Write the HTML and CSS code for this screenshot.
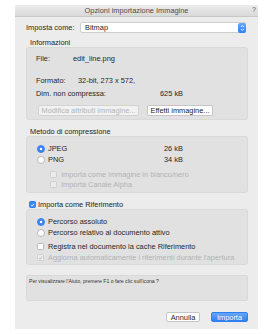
FILE: index.html
```html
<!DOCTYPE html>
<html>
<head>
<meta charset="utf-8">
<link rel="stylesheet" href="styles.css">
</head>
<body>
<div class="window">
  <div class="titlebar">
    <span class="title">Opzioni importazione Immagine</span>
    <span class="qhelp">?</span>
  </div>
  <div class="content">
    <div class="field-row">
      <span class="field-label">Imposta come:</span>
      <div class="select">
        <span class="select-value">Bitmap</span>
        <span class="stepper">
          <svg width="5" height="8" viewBox="0 0 5 8"><path d="M1 3 L2.5 1.5 L4 3 M1 5 L2.5 6.5 L4 5" fill="none" stroke="#fff" stroke-width="0.9"/></svg>
        </span>
      </div>
    </div>

    <div class="section-title">Informazioni</div>
    <div class="group info">
      <div class="kv"><span class="k k-file">File:</span><span>edit_line.png</span></div>
      <div class="kv kv-gap"><span class="k k-fmt">Formato:</span><span>32-bit, 273 x 572,</span></div>
      <div class="kv"><span class="k k-dim">Dim. non compressa:</span><span>625 kB</span></div>
      <div class="btn-row">
        <span class="btn disabled btn-mod">Modifica attributi immagine...</span>
        <span class="btn btn-eff">Effetti immagine...</span>
      </div>
    </div>

    <div class="section-title sec2">Metodo di compressione</div>
    <div class="group comp">
      <div class="opt"><span class="radio on"></span><span class="opt-name">JPEG</span><span>26 kB</span></div>
      <div class="opt"><span class="radio"></span><span class="opt-name">PNG</span><span>34 kB</span></div>
      <div class="opt sub dis first-sub"><span class="check dis"></span><span>Importa come immagine in bianco/nero</span></div>
      <div class="opt sub dis"><span class="check dis"></span><span>Importa Canale Alpha</span></div>
    </div>

    <div class="section-title check-title"><span class="check on small"><svg width="6" height="6" viewBox="0 0 6 6"><path d="M1.2 3.1 L2.5 4.4 L4.8 1.5" fill="none" stroke="#fff" stroke-width="1"/></svg></span><span>Importa come Riferimento</span></div>
    <div class="group ref">
      <div class="opt"><span class="radio on"></span><span>Percorso assoluto</span></div>
      <div class="opt"><span class="radio"></span><span>Percorso relativo al documento attivo</span></div>
      <div class="opt cache"><span class="check"></span><span>Registra nel documento la cache Riferimento</span></div>
      <div class="opt dis"><span class="check dis"><svg width="6" height="6" viewBox="0 0 6 6"><path d="M1.2 3.1 L2.5 4.4 L4.8 1.5" fill="none" stroke="#b5b5b5" stroke-width="1"/></svg></span><span>Aggiorna automaticamente i riferimenti durante l'apertura</span></div>
    </div>

    <div class="helpbox">Per visualizzare l'Aiuto, premere F1 o fare clic sull'icona ?</div>

    <div class="footer">
      <span class="btn btn-cancel">Annulla</span>
      <span class="btn primary">Importa</span>
    </div>
  </div>
</div>
</body>
</html>
```

FILE: styles.css
```css
html, body {
  margin: 0;
  padding: 0;
  background: #ffffff;
}
body {
  font-family: "Liberation Sans", Arial, sans-serif;
  font-size: 7.4px;
  color: #262626;
}
.window {
  margin: 5px 0 0 15px;
  width: 243px;
  height: 324px;
  background: #ececec;
  display: flex;
  flex-direction: column;
}
.titlebar {
  height: 11px;
  background: linear-gradient(#ececec, #d9d9d9);
  border-bottom: 1px solid #c8c8c8;
  display: flex;
  align-items: center;
  justify-content: center;
  position: relative;
  color: #4a4a4a;
}
.title { font-size: 7.4px; }
.qhelp {
  position: absolute;
  right: 2px;
  top: 1px;
  font-size: 7px;
  color: #555;
}
.content {
  padding: 4px 10px 0 11px;
  display: flex;
  flex-direction: column;
}
.field-row {
  display: flex;
  align-items: center;
  height: 13px;
}
.field-label { width: 54px; }
.select {
  flex: 1;
  margin-right: 2px;
  height: 11px;
  background: #fff;
  border: 1px solid #cfcfcf;
  border-radius: 2px;
  display: flex;
  align-items: center;
  justify-content: space-between;
  box-sizing: border-box;
}
.select-value { padding-left: 4px; }
.stepper {
  width: 8px;
  height: 10px;
  background: linear-gradient(#6aa9fb, #2f7ff3);
  border-radius: 2px;
  margin-right: -1px;
  display: flex;
  align-items: center;
  justify-content: center;
}
.section-title {
  height: 9px;
  line-height: 9px;
  padding-left: 4px;
  margin-top: 4px;
  color: #222;
}
.section-title.sec2 { margin-top: 7px; }
.group {
  background: #e1e1e1;
  border: 1px solid #d9d9d9;
  border-radius: 3px;
  box-sizing: border-box;
}
.info {
  height: 73px;
  padding: 6px 0 0 9px;
}
.kv {
  display: flex;
  height: 10px;
  line-height: 10px;
}
.kv + .kv { margin-top: 3px; }
.kv.kv-gap { margin-top: 12px; }
.k-file { width: 37px; }
.k-fmt { width: 42px; }
.k-dim { width: 124px; }
.btn-row {
  display: flex;
  gap: 8px;
  margin-top: 6px;
  padding-left: 2px;
}
.btn {
  height: 11px;
  line-height: 10px;
  box-sizing: border-box;
  background: #fff;
  border: 1px solid #c6c6c6;
  border-radius: 2px;
  padding: 0 2px;
  text-align: center;
  white-space: nowrap;
  overflow: hidden;
}
.btn.disabled {
  color: #b3b3b3;
  background: #f1f1f1;
  border-color: #d3d3d3;
}
.btn-mod { width: 101px; }
.btn-eff { width: 66px; }
.comp {
  height: 57px;
  padding: 6px 0 0 10px;
}
.opt {
  display: flex;
  align-items: center;
  height: 11px;
  white-space: nowrap;
}
.opt-name { width: 116px; }
.radio {
  width: 8px;
  height: 8px;
  border-radius: 50%;
  background: #fff;
  border: 1px solid #b8b8b8;
  box-sizing: border-box;
  margin-right: 3px;
  flex: none;
}
.radio.on {
  background: radial-gradient(circle, #fff 0 1.3px, #3a88f4 1.6px);
  border-color: #2f7ff0;
}
.check {
  width: 7px;
  height: 7px;
  border-radius: 1.5px;
  background: #fff;
  border: 1px solid #b8b8b8;
  box-sizing: border-box;
  margin-right: 4px;
  flex: none;
  display: flex;
  align-items: center;
  justify-content: center;
}
.check.on {
  background: #3a88f4;
  border-color: #2f7ff0;
}
.check.dis {
  background: #ececec;
  border-color: #cfcfcf;
}
.opt.dis { color: #b3b3b3; }
.opt.sub { padding-left: 13px; height: 10px; }
.opt.first-sub { margin-top: 4px; }
.check-title {
  display: flex;
  align-items: center;
  padding-left: 3px;
  margin-top: 7px;
}
.check-title .check { margin-right: 2px; }
.ref {
  height: 56px;
  padding: 6px 0 0 10px;
}
.opt.cache { margin-top: 3px; }
.helpbox {
  margin-top: 10px;
  height: 26px;
  background: #e1e1e1;
  border: 1px solid #d9d9d9;
  border-radius: 2px;
  box-sizing: border-box;
  font-size: 5.1px;
  padding: 2px 0 0 2px;
  color: #333;
  white-space: nowrap;
}
.footer {
  display: flex;
  justify-content: flex-end;
  gap: 11px;
  margin-top: 11px;
  padding-right: 0;
}
.btn-cancel { width: 34px; height: 10px; line-height: 9px; }
.primary {
  width: 37px;
  height: 10px;
  line-height: 9px;
  background: linear-gradient(#67a7fb, #2f7ff3);
  border-color: #2f7ff0;
  color: #fff;
}
```
